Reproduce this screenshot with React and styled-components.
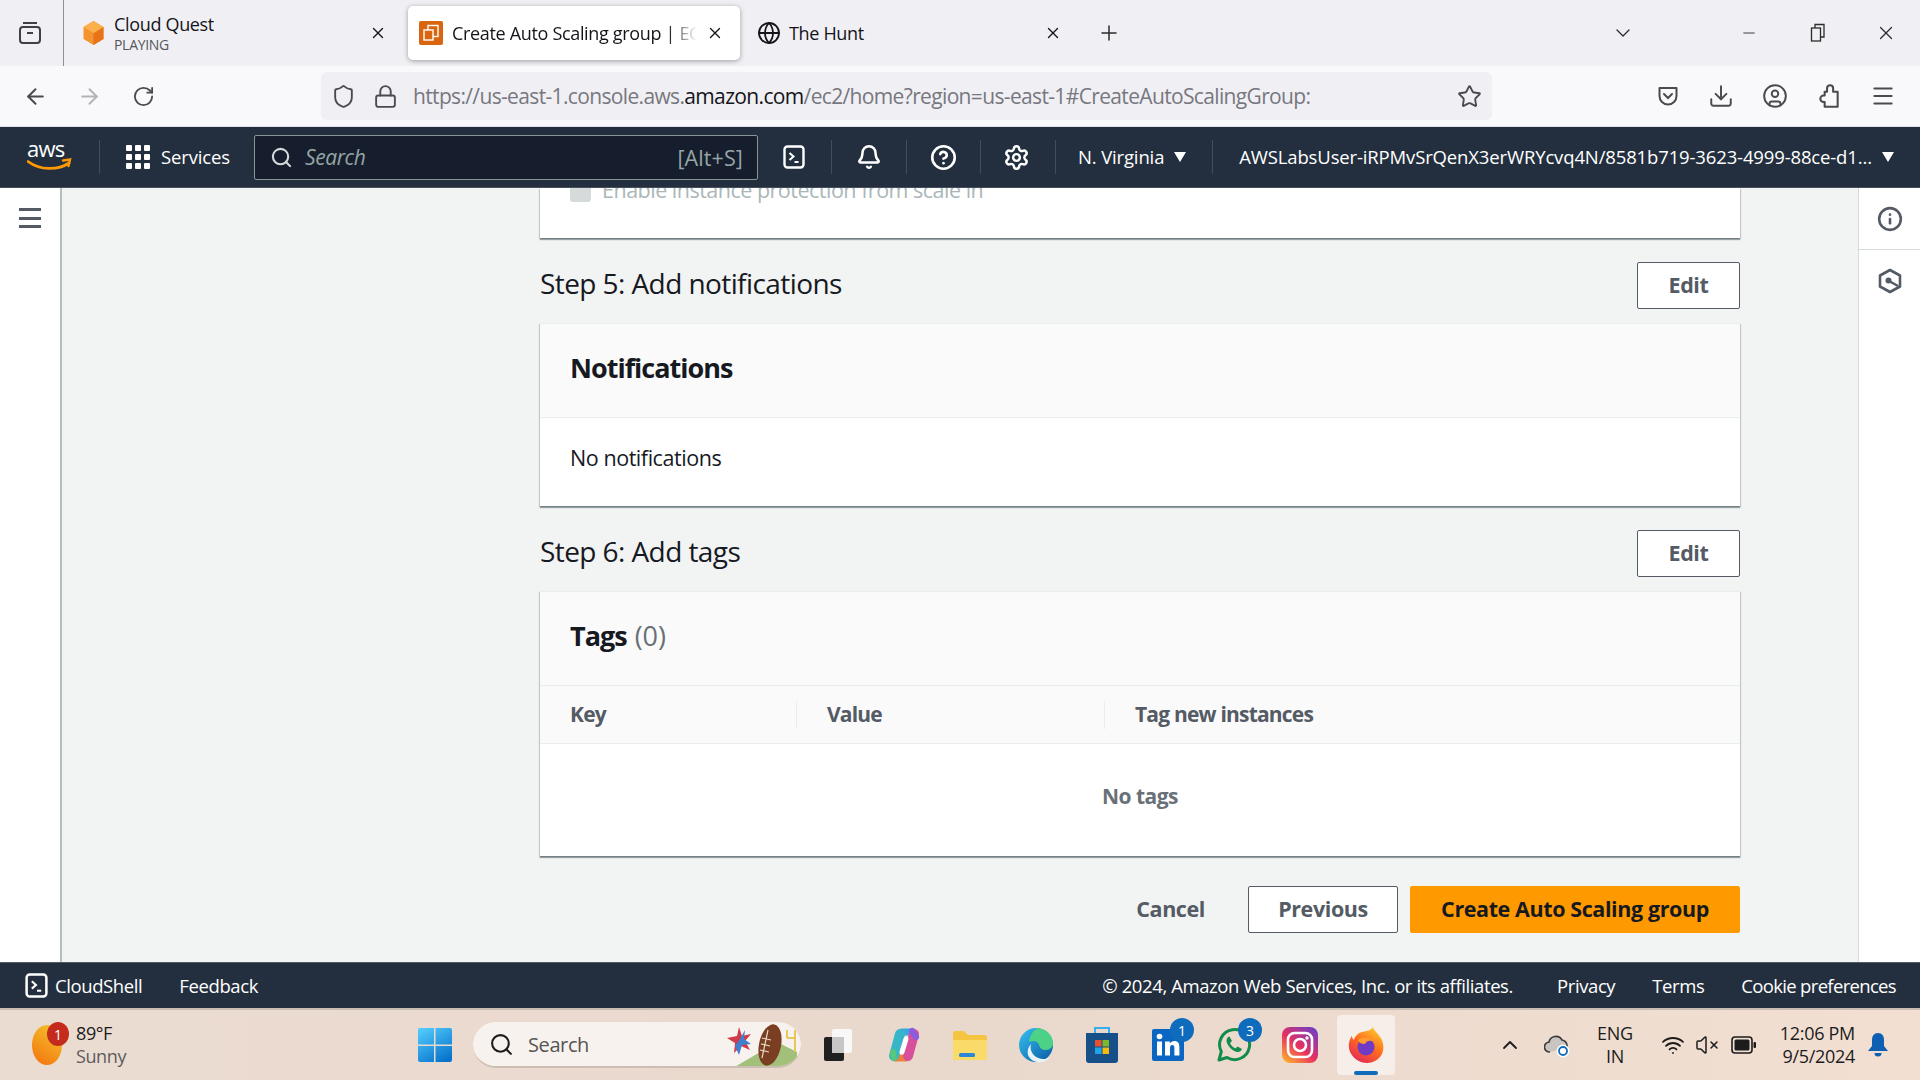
import React from 'react';
import styled, { createGlobalStyle } from 'styled-components';
import { ArrowLeft, ArrowRight, RotateCw, Shield, Lock, Star, Download, CircleUser, Menu, ChevronDown, ChevronUp, X, Plus, Minus, Globe, Search, Bell, CircleHelp, Settings, Info, Wifi, VolumeX } from 'lucide-react';

const GlobalStyle = createGlobalStyle`
  html, body { margin: 0; padding: 0; }
  body { font-family: 'Open Sans', 'Noto Sans', sans-serif; background: #f2f3f3; overflow: hidden; }
  * { box-sizing: border-box; }
`;

const Page = styled.div`
  width: 1920px;
  height: 1080px;
  display: flex;
  flex-direction: column;
  overflow: hidden;
`;

/* browser chrome */
const TabBar = styled.div`
  height: 66px;
  background: #f0f0f4;
  display: flex;
  align-items: center;
  flex-shrink: 0;
`;

const TabGroupButton = styled.div`
  width: 64px;
  height: 66px;
  border-right: 1px solid #8f8f9d;
  padding-right: 4px;
  display: flex;
  align-items: center;
  justify-content: center;
  color: #3f3f46;
`;

const Tab = styled.div`
  width: ${({ $w }) => $w}px;
  height: 54px;
  margin-left: ${({ $ml }) => $ml || 0}px;
  display: flex;
  align-items: center;
  gap: ${({ $active }) => ($active ? 9 : 8)}px;
  padding: ${({ $active }) => ($active ? '0 14px 0 11px' : '0 6px')};
  border-radius: 5px;
  color: #15141a;
  background: ${({ $active }) => ($active ? '#fff' : 'transparent')};
  box-shadow: ${({ $active }) => ($active ? '0 1px 5px rgba(0,0,0,.35)' : 'none')};
`;

const TabTitle = styled.div`
  font-size: 18px;
  line-height: 24px;
  letter-spacing: -0.33px;
  white-space: nowrap;
  overflow: hidden;
  flex: 1;
  min-width: 0;
  mask-image: ${({ $fade }) => ($fade ? 'linear-gradient(to right, #000 88%, transparent)' : 'none')};
`;

const TabSub = styled.div`
  font-size: 14px;
  line-height: 18px;
  letter-spacing: -0.3px;
  color: #55555d;
`;

const TabClose = styled.div`
  display: flex;
  color: #15141a;
  margin-right: 2px;
`;

const Spring = styled.div`
  flex: 1;
`;

const WinControl = styled.div`
  width: ${({ $w }) => $w}px;
  margin-left: ${({ $ml }) => $ml || 0}px;
  display: flex;
  justify-content: center;
  color: #2b2b2b;
`;

const NavBar = styled.div`
  height: 61px;
  background: #f9f9fb;
  display: flex;
  align-items: center;
  padding-left: 17px;
  flex-shrink: 0;
  border-bottom: 1px solid #e0e0e6;
`;

const NavBtn = styled.div`
  width: 36px;
  margin-right: ${({ $mr }) => $mr || 18}px;
  display: flex;
  justify-content: center;
  color: ${({ $off }) => ($off ? '#b4b4b8' : '#4a4a50')};
`;

const UrlBar = styled.div`
  width: 1171px;
  height: 48px;
  margin-left: 146px;
  background: #f0f0f4;
  border-radius: 6px;
  display: flex;
  align-items: center;
  padding: 0 10px 0 10px;
  gap: 17px;
  color: #4a4a50;
`;

const UrlText = styled.div`
  flex: 1;
  margin-left: -2px;
  font-size: 21px;
  letter-spacing: -0.65px;
  color: #77777f;
  white-space: nowrap;
  overflow: hidden;
  b { font-weight: 400; color: #15141a; }
`;

const NavTools = styled.div`
  display: flex;
  align-items: center;
  margin-left: 164px;
  gap: 28px;
  color: #4a4a50;
`;

/* aws console header */
const Header = styled.div`
  height: 61px;
  background: #232f3e;
  display: flex;
  align-items: center;
  flex-shrink: 0;
  color: #fff;
  border-bottom: 1px solid #454f5b;
  padding-left: 27px;
`;

const HeaderSep = styled.div`
  width: 1px;
  height: 34px;
  background: #414d5c;
  margin: 0 ${({ $m }) => $m}px;
`;

const Services = styled.div`
  display: flex;
  align-items: center;
  gap: 11px;
  font-size: 18.5px;
  letter-spacing: -0.14px;
  span { margin-top: -2px; }
`;

const SearchBox = styled.div`
  width: 504px;
  height: 45px;
  margin-left: 24px;
  margin-right: 20px;
  background: #161e2d;
  border: 1px solid #879596;
  border-radius: 2px;
  display: flex;
  align-items: center;
  padding: 0 14px 0 15px;
  gap: 12px;
  color: #d5dbdb;
`;

const SearchHint = styled.div`
  flex: 1;
  font-size: 21px;
  font-style: italic;
  letter-spacing: -0.4px;
  color: #95a5a6;
`;

const SearchKey = styled.div`
  font-size: 21.5px;
  letter-spacing: 0.1px;
  color: #95a5a6;
`;

const HeaderIcon = styled.div`
  width: 32px;
  display: flex;
  justify-content: center;
  color: #fff;
`;

const HeaderLink = styled.div`
  font-size: 18.5px;
  letter-spacing: -0.14px;
  display: flex;
  align-items: center;
  gap: 10px;
  white-space: nowrap;
  span:first-child { margin-top: -2px; }
`;

const Caret = styled.i`
  width: 0;
  height: 0;
  border-left: 6px solid transparent;
  border-right: 6px solid transparent;
  border-top: 10px solid #fff;
`;

/* page body */
const Body = styled.div`
  height: 774px;
  display: flex;
  flex-shrink: 0;
`;

const LeftRail = styled.div`
  width: 62px;
  background: #fff;
  border-right: 2px solid #b4bfc0;
  padding: 20px 0 0 19px;
`;

const RailBar = styled.div`
  width: 22px;
  height: 3px;
  margin-bottom: 5.5px;
  background: #545b64;
`;

const Main = styled.div`
  flex: 1;
  overflow: hidden;
  padding-left: 478px;
  padding-right: 118px;
  display: flex;
  flex-direction: column;
`;

const RightRail = styled.div`
  width: 62px;
  background: #fff;
  border-left: 1px solid #d5dbdb;
  display: flex;
  flex-direction: column;
  color: #545b64;
`;

const RailSlot = styled.div`
  height: 62px;
  display: flex;
  align-items: center;
  justify-content: center;
  border-bottom: ${({ $line }) => ($line ? '1px solid #d5dbdb' : 'none')};
`;

const Card = styled.div`
  background: #fff;
  box-shadow: 0 2px 1px 0 rgba(0, 28, 36, 0.35), 1px 1px 1px 0 rgba(0, 28, 36, 0.15), -1px 1px 1px 0 rgba(0, 28, 36, 0.15);
  border-top: 1px solid #eaeded;
`;

const ClippedCard = styled(Card)`
  height: 50px;
  border-top: none;
  padding-left: 30px;
  display: flex;
  gap: 11px;
  overflow: hidden;
  flex-shrink: 0;
`;

const DisabledBox = styled.div`
  width: 21px;
  height: 21px;
  margin-top: -7px;
  border-radius: 3px;
  background: #d5dbdb;
`;

const DisabledLabel = styled.div`
  font-size: 21.5px;
  line-height: 24px;
  letter-spacing: -0.5px;
  color: #aab7b8;
  margin-top: -10px;
`;

const StepRow = styled.div`
  display: flex;
  align-items: flex-start;
  justify-content: space-between;
  height: 85px;
  padding-top: 24px;
  flex-shrink: 0;
`;

const StepTitle = styled.h2`
  margin: 0;
  font-size: 28px;
  line-height: 43px;
  font-weight: 400;
  letter-spacing: -0.58px;
  color: #16191f;
`;

const Button = styled.div`
  height: 47px;
  width: ${({ $w }) => $w}px;
  padding-bottom: 2px;
  border: 1px solid #545b64;
  border-radius: 2px;
  background: #fff;
  color: #545b64;
  font-size: 21.5px;
  font-weight: 700;
  letter-spacing: -0.4px;
  display: flex;
  align-items: center;
  justify-content: center;
`;

const PrimaryButton = styled(Button)`
  background: #ff9900;
  border-color: #ff9900;
  color: #16191f;
`;

const CardHead = styled.div`
  height: 94px;
  background: #fafafa;
  border-bottom: 1px solid #eaeded;
  display: flex;
  align-items: center;
  padding: 0 0 7px 30px;
`;

const CardTitle = styled.h3`
  margin: 0;
  font-size: 27px;
  font-weight: 700;
  letter-spacing: -1px;
  color: #16191f;
  span { font-weight: 400; color: #687078; letter-spacing: 0; margin-left: 2px; }
`;

const CardBody = styled.div`
  height: 88px;
  display: flex;
  align-items: center;
  padding: 0 0 9px 30px;
  font-size: 21.5px;
  letter-spacing: -0.44px;
  color: #16191f;
`;

const TableHead = styled.div`
  height: 58px;
  background: #fafafa;
  border-bottom: 1px solid #eaeded;
  display: grid;
  grid-template-columns: 256px 308px 1fr;
  align-items: center;
`;

const HeadCell = styled.div`
  padding-left: 30px;
  padding-bottom: 1px;
  height: 28px;
  display: flex;
  align-items: center;
  font-size: 21px;
  font-weight: 700;
  letter-spacing: -0.8px;
  color: #545b64;
  border-left: ${({ $first }) => ($first ? 'none' : '1px solid #eaeded')};
`;

const EmptyRow = styled.div`
  height: 112px;
  display: flex;
  align-items: center;
  justify-content: center;
  padding-bottom: 8px;
  font-size: 21px;
  font-weight: 700;
  letter-spacing: -0.55px;
  color: #687078;
`;

const Actions = styled.div`
  display: flex;
  justify-content: flex-end;
  align-items: center;
  margin-top: 30px;
  gap: 12px;
`;

const CancelLink = styled.div`
  font-size: 21.5px;
  font-weight: 700;
  letter-spacing: -0.4px;
  color: #545b64;
  margin-right: 31px;
  padding-bottom: 2px;
`;

const Footer = styled.div`
  height: 46px;
  background: #232f3e;
  border-top: 1px solid #545b64;
  display: flex;
  align-items: center;
  padding: 0 24px;
  color: #fff;
  font-size: 18.5px;
  letter-spacing: -0.4px;
  flex-shrink: 0;
`;

const FooterItem = styled.div`
  display: flex;
  align-items: center;
  gap: 6px;
  margin-left: ${({ $ml }) => $ml || 0}px;
  letter-spacing: ${({ $tight }) => ($tight ? '-0.67px' : 'inherit')};
  white-space: nowrap;
`;

/* windows taskbar */
const Taskbar = styled.div`
  height: 72px;
  background: linear-gradient(to right, #ebdcd2, #e9d8cc 50%, #f2dfd2);
  border-top: 2px solid #c9bcb2;
  display: flex;
  align-items: center;
  flex-shrink: 0;
`;

const Weather = styled.div`
  width: 417px;
  padding-left: 30px;
  display: flex;
  align-items: center;
  gap: 10px;
  position: relative;
`;

const WeatherBadge = styled.div`
  position: absolute;
  left: 47px;
  top: 0;
  width: 22px;
  height: 24px;
  border-radius: 50%;
  background: #c42b1c;
  color: #fff;
  font-size: 14px;
  display: flex;
  align-items: center;
  justify-content: center;
`;

const WeatherText = styled.div`
  font-size: 18px;
  line-height: 23px;
  letter-spacing: -0.4px;
  color: #1c1c1c;
  div + div { color: #5c5c5c; }
`;

const WinSearch = styled.div`
  width: 328px;
  height: 46px;
  margin-left: 20px;
  margin-right: 4px;
  border-radius: 23px;
  background: #f8f2ee;
  border-bottom: 2px solid #cdbdb2;
  display: flex;
  align-items: center;
  padding-left: 16px;
  gap: 14px;
  font-size: 20px;
  letter-spacing: -0.4px;
  color: #555;
  position: relative;
  overflow: hidden;
`;

const SearchArt = styled.svg`
  position: absolute;
  right: 4px;
  top: 0;
`;

const TaskIcon = styled.div`
  width: 66px;
  height: 60px;
  display: flex;
  align-items: center;
  justify-content: center;
  position: relative;
`;

const ActiveTaskIcon = styled(TaskIcon)`
  width: 58px;
  margin-left: 4px;
  background: #f6efe9;
  border-radius: 4px;
  &::after {
    content: '';
    position: absolute;
    bottom: 0;
    left: 17px;
    width: 24px;
    height: 4px;
    border-radius: 2px;
    background: #0f6cbd;
  }
`;

const CountBadge = styled.div`
  position: absolute;
  right: ${({ $r }) => $r}px;
  top: 3px;
  width: 24px;
  height: 24px;
  border-radius: 50%;
  background: #0f6cbd;
  color: #fff;
  font-size: 14px;
  display: flex;
  align-items: center;
  justify-content: center;
`;

const Tray = styled.div`
  margin-left: auto;
  display: flex;
  align-items: center;
  color: #1c1c1c;
  padding-right: 31px;
`;

const TrayText = styled.div`
  font-size: 18px;
  line-height: 23px;
  letter-spacing: -0.3px;
  text-align: ${({ $align }) => $align || 'center'};
  margin-left: ${({ $ml }) => $ml}px;
  white-space: nowrap;
`;

const TraySlot = styled.div`
  display: flex;
  margin-left: ${({ $ml }) => $ml || 0}px;
`;

function TerminalIcon({ size = 24 }) {
  return (
    <svg width={size} height={size} viewBox="0 0 24 24" fill="none" stroke="#fff">
      <rect x="2.500" y="1.500" width="19" height="21" rx="3" strokeWidth="2.400" />
      <path d="M7.500 8l4 3.500-4 3.500" strokeWidth="2" />
      <path d="M12.500 17h4" strokeWidth="2" />
    </svg>
  );
}

function AwsLogo() {
  return (
    <svg width="46" height="46" viewBox="0 -6 46 46">
      <text x="0" y="17" fontFamily="'Open Sans', sans-serif" fontSize="22" letterSpacing="-0.7" fill="#fff">aws</text>
      <path d="M1 21.500c12 9 30 9 41 1.500" fill="none" stroke="#ff9900" strokeWidth="2.800" strokeLinecap="round" />
      <path d="M36 20.500l7-1-1.500 6.500" fill="none" stroke="#ff9900" strokeWidth="2.400" strokeLinecap="round" />
    </svg>
  );
}

function GridIcon() {
  return (
    <svg width="24" height="24" viewBox="0 0 24 24" fill="#fff">
      {[0, 9, 18].map((y) =>
        [0, 9, 18].map((x) => <rect key={`${x}-${y}`} x={x} y={y} width="6" height="6" rx="1" />)
      )}
    </svg>
  );
}

function TabGroupIcon() {
  return (
    <svg width="26" height="26" viewBox="0 0 26 26" fill="none" stroke="currentColor" strokeWidth="2">
      <rect x="3" y="7" width="20" height="16" rx="3" />
      <path d="M6 3h14" />
      <path d="M10 13h6" />
    </svg>
  );
}

function CubeIcon() {
  return (
    <svg width="25" height="26" viewBox="0 0 24 26">
      <path d="M12 1l10 6v12l-10 6-10-6V7z" fill="#f59331" />
      <path d="M12 13l10-6v12l-10 6z" fill="#e8741a" />
      <path d="M12 13L2 7l10-6 10 6z" fill="#fbb04c" />
    </svg>
  );
}

function Ec2Favicon() {
  return (
    <svg width="24" height="24" viewBox="0 0 24 24" fill="none">
      <rect width="24" height="24" rx="2" fill="#d9650e" />
      <rect x="9" y="4.500" width="10" height="11" stroke="#fff" strokeWidth="1.400" />
      <rect x="5" y="9" width="9" height="10" fill="#d9650e" stroke="#fff" strokeWidth="1.400" />
    </svg>
  );
}

function RestoreIcon() {
  return (
    <svg width="16" height="20" viewBox="0 0 16 20" fill="none" stroke="#2b2b2b" strokeWidth="1.300">
      <rect x="1.500" y="5" width="9" height="13" />
      <path d="M5 5V1.500h9V14h-3.500" />
    </svg>
  );
}

function PocketIcon() {
  return (
    <svg width="24" height="24" viewBox="0 0 24 24" fill="none" stroke="currentColor" strokeWidth="2">
      <path d="M3.500 4h17v8a8.500 8.500 0 0 1-17 0z" strokeLinejoin="round" />
      <path d="M8 10l4 4 4-4" strokeLinecap="round" />
    </svg>
  );
}

function ExtensionIcon() {
  return (
    <svg width="26" height="26" viewBox="0 0 24 24" fill="none" stroke="currentColor" strokeWidth="1.900" strokeLinejoin="round">
      <path d="M13 2c1.600 0 2.800 1.200 2.800 2.800V8H20v14H8v-4.500H7a3 3 0 0 1 0-6h1V8h2.200V4.800C10.200 3.200 11.400 2 13 2z" />
    </svg>
  );
}

function SecurityIcon() {
  return (
    <svg width="24" height="26" viewBox="0 0 24 26" fill="none" stroke="currentColor" strokeWidth="2.600">
      <path d="M12 2l10 5.500v11L12 24 2 18.500v-11z" strokeLinejoin="round" />
      <circle cx="10.500" cy="12.500" r="3" fill="currentColor" stroke="none" />
      <path d="M11 13l9 5" strokeWidth="2.400" />
    </svg>
  );
}

function WeatherIcon() {
  return (
    <svg width="36" height="42" viewBox="0 0 36 42">
      <defs>
        <linearGradient id="sunFill" x1="0.7" y1="0" x2="0.2" y2="1">
          <stop offset="0" stopColor="#f3c02c" />
          <stop offset="1" stopColor="#f4760e" />
        </linearGradient>
      </defs>
      <ellipse cx="17" cy="21" rx="15" ry="20" fill="url(#sunFill)" />
    </svg>
  );
}

function WindowsLogo() {
  return (
    <svg width="36" height="36" viewBox="0 0 36 36">
      <defs>
        <linearGradient id="winFill" x1="0.2" y1="0" x2="0.8" y2="1">
          <stop offset="0" stopColor="#4fc8fb" />
          <stop offset="1" stopColor="#0672cb" />
        </linearGradient>
      </defs>
      <path d="M1 3a2 2 0 0 1 2-2h14v16.500H1zM18.500 1H33a2 2 0 0 1 2 2v14.500H18.500zM1 19h16v16H3a2 2 0 0 1-2-2zM18.500 19H35v14a2 2 0 0 1-2 2H18.500z" fill="url(#winFill)" />
    </svg>
  );
}

function FootballArt() {
  return (
    <SearchArt width="72" height="46" viewBox="0 0 72 46">
      <path d="M8 46l44-26 20 10v16z" fill="#a3c07a" />
      <path d="M70 8v22M62 16h8M62 8v8" stroke="#e6c85a" strokeWidth="2" fill="none" />
      <path d="M14 5l3 9 9-2-6 7 5 9-9-4-7 7 1-10-8-5 10-2z" fill="#d23a4a" />
      <path d="M20 8l-1 9 7 5-9 1-3 10-4-9 5-7z" fill="#3f7fd0" />
      <ellipse cx="45" cy="23" rx="11" ry="21" transform="rotate(12 45 23)" fill="#7a3f22" />
      <path d="M43 8l-6 28M37 16l9 2M36 22l9 2M35 28l9 2" stroke="#e9d8c8" strokeWidth="1.200" fill="none" />
    </SearchArt>
  );
}

function TaskView() {
  return (
    <svg width="30" height="34" viewBox="0 0 30 34">
      <rect x="9" y="1" width="20" height="24" rx="2" fill="#f8f8f8" />
      <rect x="1" y="9" width="20" height="24" rx="2" fill="#202020" />
      <rect x="9" y="9" width="12" height="16" fill="#c6c6c6" />
    </svg>
  );
}

function CopilotIcon() {
  return (
    <svg width="34" height="36" viewBox="0 0 34 36" fill="none" strokeLinecap="round">
      <path d="M15 5H26" stroke="#3ba7e0" strokeWidth="7" />
      <path d="M8 31H19" stroke="#f0803c" strokeWidth="7" />
      <path d="M13 7L7 29" stroke="#36b6c8" strokeWidth="10" />
      <path d="M27 7L21 29" stroke="#d84f9c" strokeWidth="10" />
      <path d="M25 4L29 10" stroke="#8a5ce0" strokeWidth="6" />
      <path d="M6 25L7 31" stroke="#58c77a" strokeWidth="6" />
      <path d="M19 12L15 25" stroke="#fff" strokeWidth="5" />
    </svg>
  );
}

function FolderIcon() {
  return (
    <svg width="36" height="32" viewBox="0 0 36 32">
      <path d="M1 4a2 2 0 0 1 2-2h9l4 4h17a2 2 0 0 1 2 2v21a2 2 0 0 1-2 2H3a2 2 0 0 1-2-2z" fill="#f5c542" />
      <path d="M1 11h34v18a2 2 0 0 1-2 2H3a2 2 0 0 1-2-2z" fill="#fadb6a" />
      <rect x="7" y="24" width="16" height="4" rx="1.500" fill="#2b88d8" />
    </svg>
  );
}

function EdgeIcon() {
  return (
    <svg width="36" height="36" viewBox="0 0 36 36">
      <defs>
        <linearGradient id="edgeFill" x1="0" y1="0" x2="1" y2="1">
          <stop offset="0" stopColor="#35c1f1" />
          <stop offset="1" stopColor="#0c59a4" />
        </linearGradient>
      </defs>
      <circle cx="18" cy="18" r="17" fill="url(#edgeFill)" />
      <path d="M20 1c9 1 15 8 15 15 0 4-3 7-7 7-4 0-6-2-7-5-1-4-6-5-10-3 1-6 3-11 9-14z" fill="#4bd286" />
      <path d="M13 17c-2 7 3 14 11 15 3 .3 6-.5 8-2-3 4-8 6-13 5-5-1-8-4-9-7-1-4 0-8 3-11z" fill="#e9f4f8" />
    </svg>
  );
}

function StoreIcon() {
  return (
    <svg width="34" height="38" viewBox="0 0 34 38" fill="none">
      <path d="M10 7V2h14v5" stroke="#35b0ee" strokeWidth="2" />
      <path d="M1 7h32v27a3 3 0 0 1-3 3H4a3 3 0 0 1-3-3z" fill="#174f88" />
      <rect x="10" y="14" width="6.500" height="6.500" fill="#e8502f" />
      <rect x="17.500" y="14" width="6.500" height="6.500" fill="#7db92b" />
      <rect x="10" y="21.500" width="6.500" height="6.500" fill="#1ea5e8" />
      <rect x="17.500" y="21.500" width="6.500" height="6.500" fill="#f6b90f" />
    </svg>
  );
}

function LinkedInIcon() {
  return (
    <svg width="32" height="32" viewBox="0 0 32 32">
      <rect width="32" height="32" rx="2" fill="#0a66c2" />
      <rect x="5" y="12.500" width="5" height="14" fill="#fff" />
      <circle cx="7.500" cy="7.500" r="2.800" fill="#fff" />
      <path d="M13 12.500h4.800v2c1-1.500 2.600-2.400 4.600-2.400 3.600 0 5 2.300 5 6v8.400h-5v-7.500c0-1.800-.6-3-2.100-3s-2.300 1.200-2.300 3v7.500h-5z" fill="#fff" />
    </svg>
  );
}

function WhatsAppIcon() {
  return (
    <svg width="36" height="36" viewBox="0 0 36 36" fill="none">
      <path d="M3 33l2.300-8.500A15 15 0 1 1 11 30.500z" stroke="#128c4a" strokeWidth="3" strokeLinejoin="round" />
      <path d="M12 10c-2 2-2 5 0 8 2.500 4 6 6.500 9 7 2.500.4 4-1 5-3l-4.500-2.500-2 2c-2.500-1-4.500-3-5.500-5.500l2-2L13.500 9.500z" fill="#128c4a" />
    </svg>
  );
}

function InstagramIcon() {
  return (
    <svg width="36" height="36" viewBox="0 0 36 36" fill="none">
      <defs>
        <linearGradient id="igFill" x1="0.1" y1="1" x2="0.9" y2="0">
          <stop offset="0" stopColor="#fdb32c" />
          <stop offset="0.45" stopColor="#e9305e" />
          <stop offset="1" stopColor="#6b3ec9" />
        </linearGradient>
      </defs>
      <rect width="36" height="36" rx="8" fill="url(#igFill)" />
      <rect x="6" y="6" width="24" height="24" rx="6.500" stroke="#fff" strokeWidth="2.600" />
      <circle cx="18" cy="18" r="6" stroke="#fff" strokeWidth="2.600" />
      <circle cx="25" cy="11" r="1.700" fill="#fff" />
    </svg>
  );
}

function FirefoxIcon() {
  return (
    <svg width="36" height="38" viewBox="0 0 36 38">
      <defs>
        <linearGradient id="foxFill" x1="0.8" y1="0" x2="0.2" y2="1">
          <stop offset="0" stopColor="#ffcb2e" />
          <stop offset="0.5" stopColor="#ff6a1f" />
          <stop offset="1" stopColor="#e3255a" />
        </linearGradient>
      </defs>
      <path d="M25 1c1 4 6 7 9 13 3 8 1 15-4 19-6 5-15 5-21 1C3 30 0 24 1 17c.5-3 2-6 3-7 0 2 1 3 2 4 1-4 4-7 8-8 4-1 9-1 11-5z" fill="url(#foxFill)" />
      <circle cx="18" cy="21" r="8.500" fill="#6f3bc4" />
      <path d="M10 14c4-3 11-3 15 1-4-1-7 0-8 3-3 0-6-1-7-4z" fill="#ff9a2e" />
    </svg>
  );
}

function OneDriveSync() {
  return (
    <svg width="28" height="28" viewBox="0 0 28 28" fill="none">
      <path d="M6 21a5 5 0 0 1-1-10 7 7 0 0 1 13-2 6 6 0 0 1 5 5v3" fill="#c9c4c0" stroke="#3a3a3a" strokeWidth="1.600" />
      <circle cx="19" cy="20" r="6.500" fill="#fff" />
      <circle cx="19" cy="20" r="4" stroke="#0f6cbd" strokeWidth="1.800" />
    </svg>
  );
}

function BatteryIcon() {
  return (
    <svg width="26" height="20" viewBox="0 0 26 20" fill="none">
      <rect x="1" y="2" width="20" height="16" rx="3" stroke="#1c1c1c" strokeWidth="1.600" />
      <rect x="3.500" y="4.500" width="15" height="11" rx="1.500" fill="#1c1c1c" />
      <rect x="22.500" y="7" width="2.500" height="6" rx="1" fill="#1c1c1c" />
    </svg>
  );
}

function TrayBell() {
  return (
    <svg width="22" height="26" viewBox="0 0 22 26" fill="#0f5fb3">
      <path d="M11 1c-4 0-6 3-6 7v6l-4 5h20l-4-5V8c0-4-2-7-6-7z" />
      <path d="M7.500 21h7a3.500 3.500 0 0 1-7 0z" />
    </svg>
  );
}

export default function App() {
  return (
    <Page>
      <GlobalStyle />
      <TabBar>
        <TabGroupButton><TabGroupIcon /></TabGroupButton>
        <Tab $w={320} $ml={11}>
          <CubeIcon />
          <TabTitle>
            Cloud Quest
            <TabSub>PLAYING</TabSub>
          </TabTitle>
          <TabClose><X size={18} strokeWidth={1.8} /></TabClose>
        </Tab>
        <Tab $w={332} $ml={13} $active>
          <Ec2Favicon />
          <TabTitle $fade>Create Auto Scaling group | EC2</TabTitle>
          <TabClose><X size={18} strokeWidth={1.8} /></TabClose>
        </Tab>
        <Tab $w={319} $ml={11}>
          <Globe size={24} strokeWidth={1.8} />
          <TabTitle>The Hunt</TabTitle>
          <TabClose><X size={18} strokeWidth={1.8} /></TabClose>
        </Tab>
        <WinControl $w={34} $ml={22}><Plus size={24} strokeWidth={1.5} /></WinControl>
        <Spring />
        <WinControl $w={40}><ChevronDown size={24} strokeWidth={1.3} /></WinControl>
        <WinControl $w={70} $ml={71}><Minus size={18} strokeWidth={1.2} /></WinControl>
        <WinControl $w={68}><RestoreIcon /></WinControl>
        <WinControl $w={68}><X size={22} strokeWidth={1.3} /></WinControl>
      </TabBar>
      <NavBar>
        <NavBtn><ArrowLeft size={25} strokeWidth={1.9} /></NavBtn>
        <NavBtn $off><ArrowRight size={25} strokeWidth={1.9} /></NavBtn>
        <NavBtn $mr={14}><RotateCw size={23} strokeWidth={1.9} /></NavBtn>
        <UrlBar>
          <Shield size={25} strokeWidth={1.8} />
          <Lock size={25} strokeWidth={1.8} />
          <UrlText>https://us-east-1.console.aws.<b>amazon.com</b>/ec2/home?region=us-east-1#CreateAutoScalingGroup:</UrlText>
          <Star size={25} strokeWidth={1.8} />
        </UrlBar>
        <NavTools>
          <PocketIcon />
          <Download size={26} strokeWidth={1.8} />
          <CircleUser size={26} strokeWidth={1.8} />
          <ExtensionIcon />
          <Menu size={26} strokeWidth={1.8} />
        </NavTools>
      </NavBar>
      <Header>
        <AwsLogo />
        <HeaderSep $m={26} />
        <Services>
          <GridIcon />
          <span>Services</span>
        </Services>
        <SearchBox>
          <Search size={23} strokeWidth={2.2} />
          <SearchHint>Search</SearchHint>
          <SearchKey>[Alt+S]</SearchKey>
        </SearchBox>
        <HeaderIcon><TerminalIcon /></HeaderIcon>
        <HeaderSep $m={21} />
        <HeaderIcon><Bell size={26} strokeWidth={2.3} /></HeaderIcon>
        <HeaderSep $m={21} />
        <HeaderIcon><CircleHelp size={27} strokeWidth={2.3} /></HeaderIcon>
        <HeaderSep $m={20} />
        <HeaderIcon><Settings size={27} strokeWidth={2.2} /></HeaderIcon>
        <HeaderSep $m={22} />
        <HeaderLink><span>N. Virginia</span><Caret /></HeaderLink>
        <HeaderSep $m={26} />
        <HeaderLink><span>AWSLabsUser-iRPMvSrQenX3erWRYcvq4N/8581b719-3623-4999-88ce-d1...</span><Caret /></HeaderLink>
      </Header>
      <Body>
        <LeftRail>
          <RailBar />
          <RailBar />
          <RailBar />
        </LeftRail>
        <Main>
          <ClippedCard>
            <DisabledBox />
            <DisabledLabel>Enable instance protection from scale in</DisabledLabel>
          </ClippedCard>
          <StepRow>
            <StepTitle>Step 5: Add notifications</StepTitle>
            <Button $w={103}>Edit</Button>
          </StepRow>
          <Card>
            <CardHead><CardTitle>Notifications</CardTitle></CardHead>
            <CardBody>No notifications</CardBody>
          </Card>
          <StepRow>
            <StepTitle>Step 6: Add tags</StepTitle>
            <Button $w={103}>Edit</Button>
          </StepRow>
          <Card>
            <CardHead><CardTitle>Tags <span>(0)</span></CardTitle></CardHead>
            <TableHead>
              <HeadCell $first>Key</HeadCell>
              <HeadCell>Value</HeadCell>
              <HeadCell>Tag new instances</HeadCell>
            </TableHead>
            <EmptyRow>No tags</EmptyRow>
          </Card>
          <Actions>
            <CancelLink>Cancel</CancelLink>
            <Button $w={150}>Previous</Button>
            <PrimaryButton $w={330}>Create Auto Scaling group</PrimaryButton>
          </Actions>
        </Main>
        <RightRail>
          <RailSlot $line><Info size={26} strokeWidth={2.4} /></RailSlot>
          <RailSlot><SecurityIcon /></RailSlot>
        </RightRail>
      </Body>
      <Footer>
        <FooterItem><TerminalIcon size={25} />CloudShell</FooterItem>
        <FooterItem $ml={37}>Feedback</FooterItem>
        <Spring />
        <FooterItem>© 2024, Amazon Web Services, Inc. or its affiliates.</FooterItem>
        <FooterItem $ml={44}>Privacy</FooterItem>
        <FooterItem $ml={37}>Terms</FooterItem>
        <FooterItem $ml={37} $tight>Cookie preferences</FooterItem>
      </Footer>
      <Taskbar>
        <Weather>
          <WeatherIcon />
          <WeatherBadge>1</WeatherBadge>
          <WeatherText>
            <div>89°F</div>
            <div>Sunny</div>
          </WeatherText>
        </Weather>
        <WindowsLogo />
        <WinSearch>
          <Search size={25} strokeWidth={2} color="#1c1c1c" />
          Search
          <FootballArt />
        </WinSearch>
        <TaskIcon><TaskView /></TaskIcon>
        <TaskIcon><CopilotIcon /></TaskIcon>
        <TaskIcon><FolderIcon /></TaskIcon>
        <TaskIcon><EdgeIcon /></TaskIcon>
        <TaskIcon><StoreIcon /></TaskIcon>
        <TaskIcon><LinkedInIcon /><CountBadge $r={7}>1</CountBadge></TaskIcon>
        <TaskIcon><WhatsAppIcon /><CountBadge $r={5}>3</CountBadge></TaskIcon>
        <TaskIcon><InstagramIcon /></TaskIcon>
        <ActiveTaskIcon><FirefoxIcon /></ActiveTaskIcon>
        <Tray>
          <ChevronUp size={24} strokeWidth={1.8} />
          <TraySlot $ml={22}><OneDriveSync /></TraySlot>
          <TrayText $ml={25}>ENG<br />IN</TrayText>
          <TraySlot $ml={28}><Wifi size={24} strokeWidth={1.8} /></TraySlot>
          <TraySlot $ml={10}><VolumeX size={24} strokeWidth={1.5} /></TraySlot>
          <TraySlot $ml={12}><BatteryIcon /></TraySlot>
          <TrayText $ml={23} $align="right">12:06 PM<br />9/5/2024</TrayText>
          <TraySlot $ml={12}><TrayBell /></TraySlot>
        </Tray>
      </Taskbar>
    </Page>
  );
}
